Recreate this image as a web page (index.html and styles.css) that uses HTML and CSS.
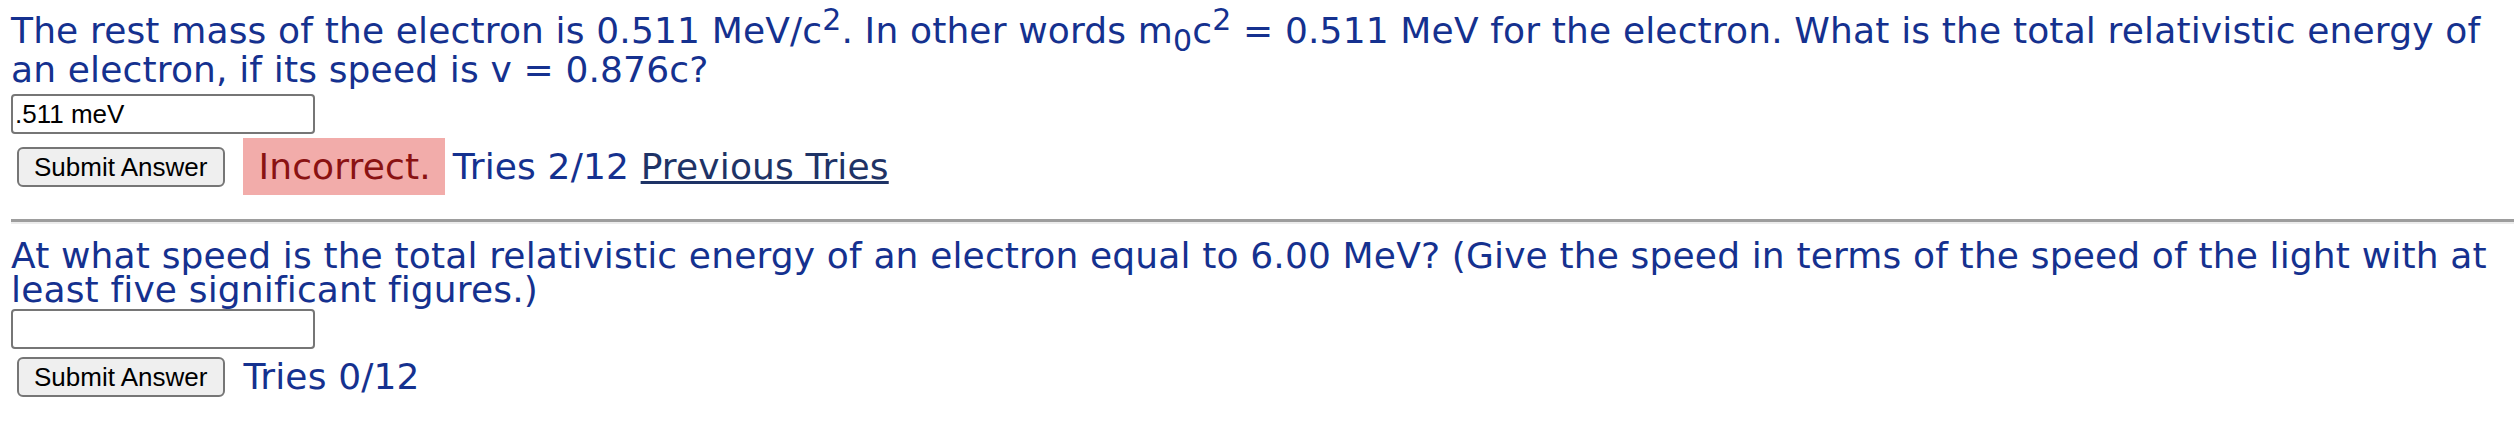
FILE: index.html
```html
<!DOCTYPE html>
<html lang="en">
<head>
    <meta charset="UTF-8">
    <title>Problem</title>
    <link rel="stylesheet" href="styles.css">
</head>
<body>
    <div class="problem">
        <p class="question">The rest mass of the electron is 0.511 MeV/c<sup>2</sup>. In other words m<sub>0</sub>c<sup>2</sup> = 0.511 MeV for the electron. What is the total relativistic energy of an electron, if its speed is v = 0.876c?</p>
        <input class="answer" type="text" value=".511 meV">
        <div class="submit-row first-row">
            <button class="submit-button">Submit Answer</button>
            <span class="feedback"><span class="incorrect">Incorrect.</span><span class="tries">Tries 2/12</span> <a class="previous" href="#">Previous Tries</a></span>
        </div>

        <hr class="divider">

        <p class="question second">At what speed is the total relativistic energy of an electron equal to 6.00 MeV? (Give the speed in terms of the speed of the light with at least five significant figures.)</p>
        <input class="answer tight" type="text" value="">
        <div class="submit-row">
            <button class="submit-button">Submit Answer</button>
            <span class="feedback"><span class="tries">Tries 0/12</span></span>
        </div>
    </div>
</body>
</html>
```

FILE: styles.css
```css
body, html {
    margin: 0;
    padding: 0;
    background-color: #ffffff;
}

.problem {
    padding: 7px 0 0 11px;
    font-family: "DejaVu Sans", Verdana, sans-serif;
    font-size: 36px;
    letter-spacing: 0.15px;
    color: #15318f;
}

/* question text */
.question {
    margin: 0;
    line-height: 34px;
}

.question sup,
.question sub {
    font-size: 30px;
    line-height: 25px;
}

.question.second {
    margin-top: 15px;
}

/* answer box */
.answer {
    display: block;
    box-sizing: border-box;
    width: 304px;
    height: 40px;
    margin: 7px 0 0 0;
    padding: 0 2px;
    border: 2px solid #767676;
    border-radius: 4px;
    font-family: "Liberation Sans", Arial, sans-serif;
    font-size: 26px;
    letter-spacing: 0;
    color: #000000;
    background-color: #ffffff;
}

.answer.tight {
    margin-top: 2px;
}

/* submit row */
.submit-row {
    display: flex;
    align-items: center;
    height: 40px;
    margin-top: 8px;
    padding-left: 6px;
}

.first-row {
    height: 58px;
    margin-top: 4px;
}

.submit-button {
    box-sizing: border-box;
    height: 40px;
    padding: 0 16px 0 15px;
    border: 2px solid #767676;
    border-radius: 6px;
    background-color: #efefef;
    font-family: "Liberation Sans", Arial, sans-serif;
    font-size: 26px;
    letter-spacing: 0;
    color: #000000;
}

.feedback {
    margin-left: 18px;
    line-height: 34px;
    white-space: nowrap;
}

.incorrect {
    padding: 8px 14px 8px 15px;
    margin-right: 8px;
    background-color: #f2acaa;
    color: #8a1212;
}

.tries {
    color: #15318f;
}

.previous {
    color: #1e3366;
    text-decoration: underline;
}

/* separator */
.divider {
    height: 0;
    margin: 23px 0 0 0;
    border: none;
    border-top: 3px solid #9d9d9d;
    border-bottom: 2px solid #ececec;
}
```
